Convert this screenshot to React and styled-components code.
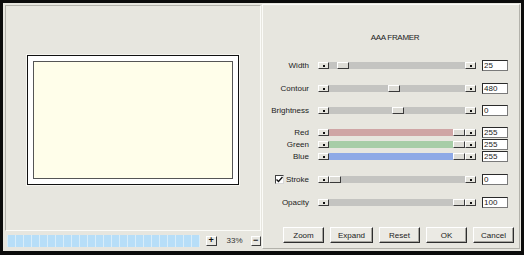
import React from 'react';
import styled, { createGlobalStyle } from 'styled-components';

const Global = createGlobalStyle`
  html, body { margin: 0; padding: 0; background: #000; }
  body { font-family: "Liberation Sans", Arial, sans-serif; }
  * { box-sizing: border-box; }
`;

const Window = styled.div`
  width: 524px;
  height: 255px;
  border-style: solid;
  border-color: #0b0b0b;
  border-width: 3px 3px 4px 3px;
  background: #e7e6df;
  display: flex;
  font-size: 8px;
  color: #1c1c1c;
`;

const LeftCol = styled.div`
  width: 259px;
  display: flex;
  flex-direction: column;
  padding: 2px 1px 0 2px;
`;

const Preview = styled.div`
  height: 226px;
  border: 1px solid;
  border-color: #b3b2ab #fbfbf8 #fbfbf8 #b3b2ab;
  display: flex;
  align-items: center;
  justify-content: center;
  padding-top: 3px;
`;

const FrameOuter = styled.div`
  width: 212px;
  height: 130px;
  border: 1px solid #111;
  background: #fff;
  padding: 5px;
  box-shadow: 0 0 0 1px #f6f5f0;
`;

const FrameInner = styled.div`
  width: 100%;
  height: 100%;
  border: 1px solid #555;
  background: #fffeea;
`;

const StatusBar = styled.div`
  margin-top: 2px;
  height: 15px;
  display: flex;
  align-items: center;
  padding-left: 2px;
`;

const Progress = styled.div`
  width: 193px;
  height: 12px;
  display: flex;
  gap: 1px;
  padding: 0 1px;
  background: #d9edf9;
`;

const Segment = styled.div`
  width: 7px;
  height: 100%;
  background: #b7def8;
`;

const SmallBtn = styled.div`
  width: 11px;
  height: 10px;
  margin-left: ${p => p.$ml}px;
  background: #e9e8e2;
  border: 1px solid;
  border-color: #fff #3c3c3c #3c3c3c #fff;
  display: flex;
  align-items: center;
  justify-content: center;
  font-size: 9px;
  line-height: 1;
  font-weight: bold;
  color: #111;
`;

const Zoom = styled.span`
  margin-left: 10px;
  width: 16px;
  color: #333;
`;

const RightCol = styled.div`
  width: 259px;
  padding: 1px 1px 2px 0;
  display: flex;
`;

const RightPanel = styled.div`
  flex: 1;
  border: 1px solid;
  border-color: #fbfbf8 #b3b2ab #b3b2ab #fbfbf8;
  display: flex;
  flex-direction: column;
`;

const Title = styled.div`
  margin-top: 28px;
  height: 10px;
  line-height: 10px;
  text-align: center;
  padding-left: 8px;
  letter-spacing: -0.3px;
  color: #222;
`;

const Row = styled.div`
  margin-top: ${p => p.$mt}px;
  height: 11px;
  display: flex;
  align-items: center;
`;

const Label = styled.div`
  width: 46px;
  margin-right: 9px;
  display: flex;
  justify-content: flex-end;
  align-items: center;
  gap: 2px;
  line-height: 11px;
`;

const Check = styled.div`
  width: 9px;
  height: 9px;
  background: #fff;
  border: 1px solid;
  border-color: #404040 #d8d8d8 #d8d8d8 #404040;
  display: flex;
  align-items: center;
  justify-content: center;
`;

const SliderBox = styled.div`
  width: 158px;
  height: 7px;
  margin-right: 6px;
  display: flex;
`;

const ArrowBtn = styled.div`
  width: 11px;
  height: 7px;
  background: #e6e5de;
  border: 1px solid;
  border-color: #fff #3a3a3a #3a3a3a #fff;
  display: flex;
  align-items: center;
  justify-content: center;
  &::after {
    content: '';
    width: 2px;
    height: 2px;
    background: #111;
  }
`;

const Track = styled.div`
  flex: 1;
  position: relative;
  background: ${p => p.$color};
`;

const Thumb = styled.div`
  position: absolute;
  top: 0;
  width: 12px;
  height: 7px;
  background: #dddcd6;
  border: 1px solid;
  border-color: #fff #3a3a3a #3a3a3a #fff;
`;

const TextBox = styled.div`
  width: 26px;
  height: 11px;
  background: #fff;
  border: 1px solid;
  border-color: #2a2a2a #7a7a7a #7a7a7a #2a2a2a;
  padding-left: 1px;
  line-height: 9px;
  font-size: 8px;
  color: #222;
`;

const ButtonRow = styled.div`
  margin-top: 19px;
  display: flex;
  gap: 6px;
  padding-left: 20px;
`;

const Button = styled.div`
  width: ${p => p.$w}px;
  height: 16px;
  background: #ebeae4;
  border: 1px solid;
  border-color: #fff #2e2e2e #2e2e2e #fff;
  box-shadow: inset -1px -1px 0 #a6a59f;
  display: flex;
  align-items: center;
  justify-content: center;
  color: #222;
`;

function Slider({ pos, color = '#c4c4c1' }) {
  return (
    <SliderBox>
      <ArrowBtn />
      <Track $color={color}>
        <Thumb style={{ left: pos }} />
      </Track>
      <ArrowBtn />
    </SliderBox>
  );
}

const rows = [
  { label: 'Width', pos: 8, value: '25', mt: 17 },
  { label: 'Contour', pos: 59, value: '480', mt: 12 },
  { label: 'Brightness', pos: 63, value: '0', mt: 11 },
  { label: 'Red', pos: 124, value: '255', mt: 11, color: '#cfa5a5' },
  { label: 'Green', pos: 124, value: '255', mt: 1, color: '#a7cda7' },
  { label: 'Blue', pos: 124, value: '255', mt: 1, color: '#8ea9e6' },
  { label: 'Stroke', pos: 0, value: '0', mt: 12, check: true },
  { label: 'Opacity', pos: 124, value: '100', mt: 12 },
];

const buttons = [
  ['Zoom', 41],
  ['Expand', 43],
  ['Reset', 41],
  ['OK', 41],
  ['Cancel', 41],
];

export default function App() {
  return (
    <>
      <Global />
      <Window>
        <LeftCol>
          <Preview>
            <FrameOuter>
              <FrameInner />
            </FrameOuter>
          </Preview>
          <StatusBar>
            <Progress>
              {Array.from({ length: 24 }).map((_, i) => (
                <Segment key={i} />
              ))}
            </Progress>
            <SmallBtn $ml={6}>+</SmallBtn>
            <Zoom>33%</Zoom>
            <SmallBtn $ml={8}>−</SmallBtn>
          </StatusBar>
        </LeftCol>
        <RightCol>
          <RightPanel>
            <Title>AAA FRAMER</Title>
            {rows.map(r => (
              <Row key={r.label} $mt={r.mt}>
                <Label>
                  {r.check && (
                    <Check>
                      <svg width="7" height="7" viewBox="0 0 7 7">
                        <path d="M0.5 3.5 L2.5 5.5 L6.5 1" stroke="#111" strokeWidth="1.4" fill="none" />
                      </svg>
                    </Check>
                  )}
                  <span>{r.label}</span>
                </Label>
                <Slider pos={r.pos} color={r.color} />
                <TextBox>{r.value}</TextBox>
              </Row>
            ))}
            <ButtonRow>
              {buttons.map(([t, w]) => (
                <Button key={t} $w={w}>{t}</Button>
              ))}
            </ButtonRow>
          </RightPanel>
        </RightCol>
      </Window>
    </>
  );
}
